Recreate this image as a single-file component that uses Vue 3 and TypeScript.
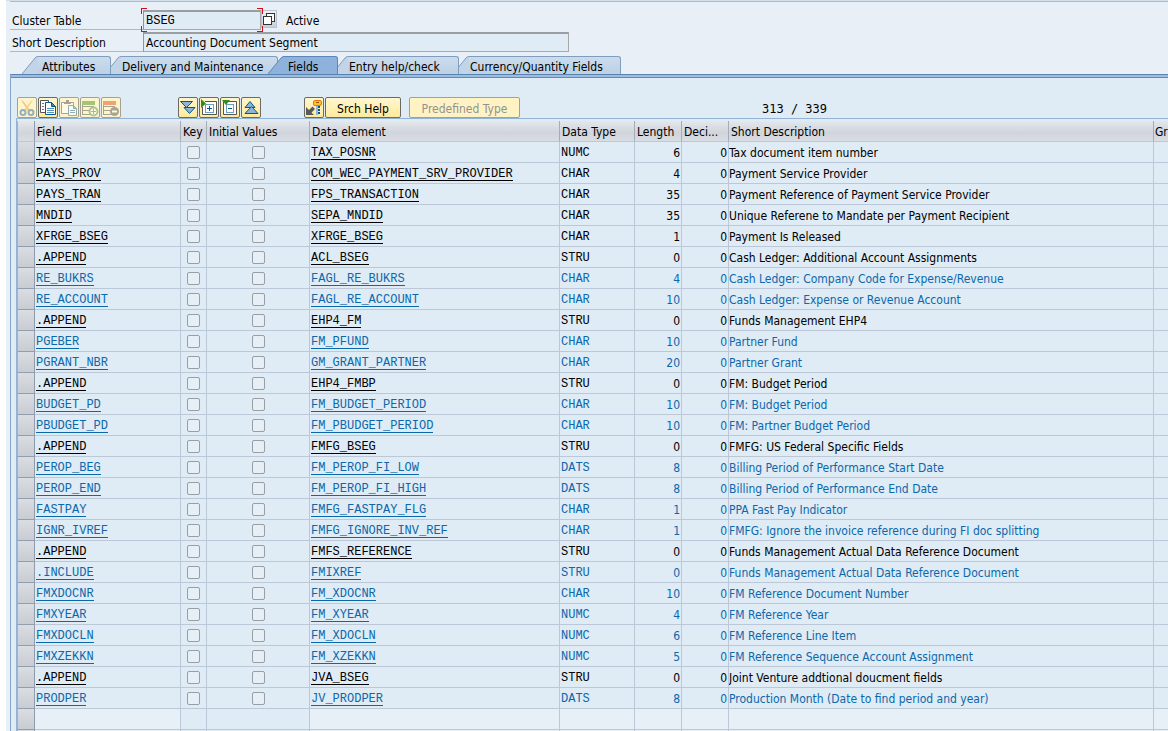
<script setup lang="ts">
import { ref } from 'vue'

interface FieldRow {
  field: string
  element: string
  type: string
  length: number
  text: string
  blue: boolean
}

const raw: [string, string, string, number, string, number][] = [
  ['TAXPS', 'TAX_POSNR', 'NUMC', 6, 'Tax document item number', 0],
  ['PAYS_PROV', 'COM_WEC_PAYMENT_SRV_PROVIDER', 'CHAR', 4, 'Payment Service Provider', 0],
  ['PAYS_TRAN', 'FPS_TRANSACTION', 'CHAR', 35, 'Payment Reference of Payment Service Provider', 0],
  ['MNDID', 'SEPA_MNDID', 'CHAR', 35, 'Unique Referene to Mandate per Payment Recipient', 0],
  ['XFRGE_BSEG', 'XFRGE_BSEG', 'CHAR', 1, 'Payment Is Released', 0],
  ['.APPEND', 'ACL_BSEG', 'STRU', 0, 'Cash Ledger: Additional Account Assignments', 0],
  ['RE_BUKRS', 'FAGL_RE_BUKRS', 'CHAR', 4, 'Cash Ledger: Company Code for Expense/Revenue', 1],
  ['RE_ACCOUNT', 'FAGL_RE_ACCOUNT', 'CHAR', 10, 'Cash Ledger: Expense or Revenue Account', 1],
  ['.APPEND', 'EHP4_FM', 'STRU', 0, 'Funds Management EHP4', 0],
  ['PGEBER', 'FM_PFUND', 'CHAR', 10, 'Partner Fund', 1],
  ['PGRANT_NBR', 'GM_GRANT_PARTNER', 'CHAR', 20, 'Partner Grant', 1],
  ['.APPEND', 'EHP4_FMBP', 'STRU', 0, 'FM: Budget Period', 0],
  ['BUDGET_PD', 'FM_BUDGET_PERIOD', 'CHAR', 10, 'FM: Budget Period', 1],
  ['PBUDGET_PD', 'FM_PBUDGET_PERIOD', 'CHAR', 10, 'FM: Partner Budget Period', 1],
  ['.APPEND', 'FMFG_BSEG', 'STRU', 0, 'FMFG: US Federal Specific Fields', 0],
  ['PEROP_BEG', 'FM_PEROP_FI_LOW', 'DATS', 8, 'Billing Period of Performance Start Date', 1],
  ['PEROP_END', 'FM_PEROP_FI_HIGH', 'DATS', 8, 'Billing Period of Performance End Date', 1],
  ['FASTPAY', 'FMFG_FASTPAY_FLG', 'CHAR', 1, 'PPA Fast Pay Indicator', 1],
  ['IGNR_IVREF', 'FMFG_IGNORE_INV_REF', 'CHAR', 1, 'FMFG: Ignore the invoice reference during FI doc splitting', 1],
  ['.APPEND', 'FMFS_REFERENCE', 'STRU', 0, 'Funds Management Actual Data Reference Document', 0],
  ['.INCLUDE', 'FMIXREF', 'STRU', 0, 'Funds Management Actual Data Reference Document', 1],
  ['FMXDOCNR', 'FM_XDOCNR', 'CHAR', 10, 'FM Reference Document Number', 1],
  ['FMXYEAR', 'FM_XYEAR', 'NUMC', 4, 'FM Reference Year', 1],
  ['FMXDOCLN', 'FM_XDOCLN', 'NUMC', 6, 'FM Reference Line Item', 1],
  ['FMXZEKKN', 'FM_XZEKKN', 'NUMC', 5, 'FM Reference Sequence Account Assignment', 1],
  ['.APPEND', 'JVA_BSEG', 'STRU', 0, 'Joint Venture addtional doucment fields', 0],
  ['PRODPER', 'JV_PRODPER', 'DATS', 8, 'Production Month (Date to find period and year)', 1],
]
const rows: FieldRow[] = raw.map(([field, element, type, length, text, blue]) => ({
  field, element, type, length, text, blue: blue === 1,
}))

const tabs = ['Attributes', 'Delivery and Maintenance', 'Fields', 'Entry help/check', 'Currency/Quantity Fields']
const tabClasses = ['t-attr', 't-deliv', 't-fields', 't-entry', 't-curr']
const active = ref(2)
const tableName = ref('BSEG')
const description = ref('Accounting Document Segment')
</script>

<template>
  <main class="window">
    <form class="head" @submit.prevent>
      <div class="line">
        <label class="caption" for="table-name">Cluster Table</label>
        <span class="focus-box">
          <input id="table-name" v-model="tableName" class="input mono" type="text">
          <i class="corner tl"></i><i class="corner tr"></i><i class="corner bl"></i><i class="corner br"></i>
        </span>
        <button class="match" type="button" aria-label="Search values">
          <svg width="12" height="12" viewBox="0 0 12 12" fill="#fff" stroke="#333">
            <rect x="3.500" y="0.500" width="8" height="8" /><rect x="0.500" y="3.500" width="8" height="8" />
          </svg>
        </button>
        <span class="status">Active</span>
      </div>
      <div class="line">
        <label class="caption" for="description">Short Description</label>
        <input id="description" v-model="description" class="input wide" type="text">
      </div>
    </form>

    <div class="tabs" role="tablist">
      <button
        v-for="(tab, i) in tabs" :key="tab" type="button" role="tab" class="tab"
        :class="[tabClasses[i], { active: active === i }]" :aria-selected="active === i" @click="active = i"
      >
        <svg class="slope" width="16" height="18" viewBox="0 0 16 18">
          <path class="slope-fill" d="M0 18 L13 2 Q14 .5 16 .5 V18Z" />
          <path class="slope-line" d="M0 18 L13 2 Q14 .5 16 .5" fill="none" />
        </svg>
        <span class="tab-text">{{ tab }}</span>
      </button>
    </div>

    <section class="panel">
      <div class="toolbar">
        <div class="group edit">
          <button type="button" class="tool" disabled aria-label="Cut">
            <svg viewBox="0 0 18 18" fill="none">
              <path d="M3 1 L5 2 L12 11 L10 12Z" fill="#e8932c" /><path d="M15 1 L13 2 L6 11 L8 12Z" fill="#f2ad45" />
              <circle cx="5" cy="13.500" r="2.500" stroke="#2b6da5" stroke-width="2" /><circle cx="13" cy="13.500" r="2.500" stroke="#2b6da5" stroke-width="2" />
            </svg>
          </button>
          <button type="button" class="tool" aria-label="Copy">
            <svg viewBox="0 0 18 18">
              <path d="M1.500 1.500H9.500V13.500H1.500Z" fill="#fff" stroke="#555" /><path d="M3 4.500H5M3 7.500H5M3 10.500H5" stroke="#777" />
              <path d="M6.500 3.500H12.500L16.500 7.500V15.500H6.500Z" fill="#fff" stroke="#005b96" /><path d="M12.500 3.500V7.500H16.500Z" fill="#4c86b2" stroke="#005b96" /><path d="M8 9.500H15M8 11.500H15M8 13.500H15" stroke="#5a94be" />
            </svg>
          </button>
          <button type="button" class="tool" disabled aria-label="Paste">
            <svg viewBox="0 0 18 18">
              <path d="M1.500 3.500H13.500V14.500H1.500Z" fill="#fff" stroke="#555" /><path d="M4 5V3H6V1H9V3H11V5Z" fill="#555" />
              <path d="M8.500 6.500H13.500L16.500 9.500V16.500H8.500Z" fill="#fff" stroke="#246a9d" /><path d="M13.500 6.500V9.500H16.500Z" fill="#83abc9" stroke="#246a9d" /><path d="M10 11.500H15M10 13.500H15" stroke="#246a9d" />
            </svg>
          </button>
          <button type="button" class="tool" disabled aria-label="Insert row">
            <svg viewBox="0 0 18 18">
              <path d="M1.500 6V16M1 11.500H12M1 15.500H10" stroke="#555" fill="none" /><path d="M1.500 7.500H13" stroke="#555" /><rect x="1" y="2" width="13" height="4" fill="#4b981d" />
              <circle cx="12.500" cy="12.500" r="4" fill="#fff" stroke="#62975a" stroke-width="2" /><path d="M12.500 10V15M10 12.500H15" stroke="#438f35" />
            </svg>
          </button>
          <button type="button" class="tool" disabled aria-label="Delete row">
            <svg viewBox="0 0 18 18">
              <path d="M1.500 6V16M1 11.500H12M1 15.500H10" stroke="#555" fill="none" /><path d="M1.500 7.500H13" stroke="#555" /><rect x="1" y="2" width="13" height="4" fill="#dc561c" />
              <circle cx="12.500" cy="12.500" r="4.500" fill="#555" /><path d="M10 12.500H15" stroke="#fff" stroke-width="2" />
            </svg>
          </button>
        </div>
        <div class="group tree">
          <button type="button" class="tool" aria-label="Expand all">
            <svg viewBox="0 0 18 18" fill="#8fb4d4" stroke="#005b8e">
              <path d="M5 8.500H16L10.500 14.500Z" /><path d="M1.500 2.500H13.500L7.500 8.500Z" />
            </svg>
          </button>
          <button type="button" class="tool" aria-label="Expand include">
            <svg viewBox="0 0 18 18" fill="none">
              <path d="M5 2.500H16.500V15.500H2.500V8" stroke="#555" fill="#fff" /><rect x="5.500" y="5.500" width="8" height="8" stroke="#6e9fc4" /><path d="M9.500 7V12M7 9.500H12" stroke="#005b8e" /><path d="M1 0V9L6 4.500Z" fill="#378b16" />
            </svg>
          </button>
          <button type="button" class="tool" aria-label="Collapse include">
            <svg viewBox="0 0 18 18" fill="none">
              <path d="M2.500 2.500H15.500V15.500H2.500Z" stroke="#555" fill="#fff" /><rect x="5.500" y="5.500" width="7" height="8" stroke="#6e9fc4" /><path d="M7 9.500H11" stroke="#005b8e" /><path d="M1 1H9L5 6Z" fill="#378b16" />
            </svg>
          </button>
          <button type="button" class="tool" aria-label="Collapse all">
            <svg viewBox="0 0 18 18" fill="#8fb4d4" stroke="#005b8e">
              <path d="M3 8.500H13L8 2.500Z" /><path d="M3 14.500H16L9.500 7.500Z" />
            </svg>
          </button>
        </div>
        <div class="group help">
          <button type="button" class="tool" aria-label="Foreign keys">
            <svg viewBox="0 0 18 18">
              <rect x="8.500" y="1.500" width="8" height="5" rx="1.500" fill="#ffc32b" stroke="#e87808" /><path d="M11 3.500H14" stroke="#a85000" />
              <rect x="11" y="7" width="2" height="9" fill="#8fb8db" /><path d="M14 7V16" stroke="#005b8e" stroke-width="2" stroke-dasharray="2 1" />
              <path d="M1 8V16H9L6.500 13.500L10 10L7.500 7.500L4 11Z" fill="#5a5a5a" />
            </svg>
          </button>
          <button type="button" class="text-button search">Srch Help</button>
          <button type="button" class="text-button predefined" disabled>Predefined Type</button>
        </div>
        <output class="position">313 / 339</output>
      </div>

      <div class="grid">
        <table>
          <colgroup>
            <col class="c-sel"><col class="c-field"><col class="c-key"><col class="c-init"><col class="c-elem">
            <col class="c-type"><col class="c-num"><col class="c-num"><col><col class="c-group">
          </colgroup>
          <thead>
            <tr>
              <th aria-label="Selection"></th><th>Field</th><th>Key</th><th>Initial Values</th><th>Data element</th>
              <th>Data Type</th><th>Length</th><th>Deci...</th><th>Short Description</th><th class="last">Gr</th>
            </tr>
          </thead>
          <tbody>
            <tr v-for="row in rows" :key="row.field + row.element" :class="{ blue: row.blue }">
              <td class="sel"></td>
              <td class="mono"><a href="#">{{ row.field }}</a></td>
              <td class="tick"><input type="checkbox" :aria-label="`Key ${row.field}`"></td>
              <td class="tick"><input type="checkbox" :aria-label="`Initial value ${row.field}`"></td>
              <td class="mono"><a href="#">{{ row.element }}</a></td>
              <td class="mono type">{{ row.type }}</td>
              <td class="num">{{ row.length }}</td>
              <td class="num">0</td>
              <td class="desc">{{ row.text }}</td>
              <td class="last"></td>
            </tr>
            <tr v-for="n in 2" :key="n" class="empty">
              <td class="sel"></td><td></td><td class="locked"></td><td class="locked"></td><td></td>
              <td></td><td></td><td></td><td></td><td class="last"></td>
            </tr>
          </tbody>
        </table>
      </div>
    </section>
  </main>
</template>

<style>
body { background: #fff; }
</style>

<style scoped>
* { box-sizing: border-box; }
.window {
  height: 100vh;
  overflow: hidden;
  margin-left: 6px;
  padding-left: 4px;
  border-top: 1px solid #d3e0eb;
  background: #e8eff7;
  color: #000;
  font: 12px/16px Tahoma, "DejaVu Sans Condensed", "DejaVu Sans", sans-serif;
}
.head { padding-top: 8px; border-top: 1px solid #a9bfd0; }
.line { display: flex; width: 560px; height: 22px; }
.line:first-child { width: 310px; }
.caption { width: 133px; flex: none; padding: 3px 2px 0; height: 20px; border-bottom: 1px solid #b4b8bc; }
.input {
  width: 118px; height: 20px; margin: 0; padding: 0 2px; border: 1px solid #a6a8aa; border-top: 2px solid #9b9ea1;
  border-left-color: #929598; background: #dfebf5; font: inherit; color: #000; outline: none; border-radius: 0;
}
.input.wide { width: 426px; }
.mono, .input.mono { font-family: "Liberation Mono", "Courier New", monospace; }
.focus-box { position: relative; width: 118px; height: 20px; flex: none; }
.corner { position: absolute; width: 6px; height: 6px; border: 0 solid #d60c18; }
.tl { left: -2px; top: -2px; border-width: 1px 0 0 1px; }
.tr { right: -2px; top: -2px; border-width: 1px 1px 0 0; }
.bl { left: -2px; bottom: -2px; border-width: 0 0 1px 1px; }
.br { right: -2px; bottom: -2px; border-width: 0 1px 1px 0; }
.match { width: 16px; height: 18px; flex: none; padding: 2px 1px; border: 1px solid #b9c4d0; background: linear-gradient(#eef2f7, #c4cfdf); line-height: 0; }
.status { padding: 3px 0 0 9px; }

.tabs { display: flex; height: 20px; padding: 2px 0 0 12px; }
.tab {
  position: relative; z-index: 1; display: flex; height: 18px; margin: 0 0 0 -6px; padding: 0; border: 0;
  background: none; font: inherit; color: #000; text-align: left; white-space: nowrap;
}
.slope { flex: none; display: block; }
.slope-fill { fill: #c1d4e8; }
.slope-line { stroke: #7f9dbe; }
.tab-text {
  flex: 1; height: 18px; padding: 2px 0 0 1px; border-top: 1px solid #7f9dbe; border-right: 1px solid #7f9dbe;
  border-radius: 0 3px 0 0; background: linear-gradient(#cbdcec, #bcd0e6);
}
.tab.active { z-index: 4; }
.tab.active .slope-fill { fill: #8eb2dc; }
.tab.active .slope-line { stroke: #5c87b8; }
.tab.active .tab-text { background: #8eb2dc; border-color: #5c87b8; }
.t-attr { width: 89px; margin-left: 0; z-index: 3; }
.t-deliv { width: 173px; z-index: 2; }
.t-fields { width: 70px; margin-left: -10px; }
.t-entry { width: 127px; z-index: 2; }
.t-curr { width: 168px; }
.t-attr .tab-text, .t-fields .tab-text { padding-left: 4px; }

.panel { border-left: 1px solid #83a6cb; border-top: 1px solid #5a84b0; background: #dfebf5; padding-left: 5px; }
.panel::before { content: ""; display: block; height: 2px; margin-left: -5px; background: #9cbce1; border-bottom: 1px solid #6488ae; }
.toolbar { display: flex; height: 40px; padding: 19px 0 0 1px; }
.group { display: flex; gap: 1px; }
.tool {
  width: 20px; height: 21px; padding: 1px 0; border: 1px solid #6b6b62; border-radius: 2px;
  background: linear-gradient(#fff6cf, #ffea9c); line-height: 0;
}
.tool svg { width: 18px; height: 18px; display: block; }
.tool:disabled { border-color: #a2a28f; background: #fff5cd; }
.tool:disabled svg { opacity: .5; }
.edit { width: 161px; }
.tree { width: 126px; }
.help { width: 458px; }
.text-button {
  height: 21px; padding: 2px 0 0; border: 1px solid #6b6b62; border-radius: 2px;
  background: linear-gradient(#fff7d1, #ffea9a); font: inherit; color: #000;
}
.search { width: 76px; }
.predefined { width: 111px; margin-left: 7px; }
.text-button:disabled { color: #929292; border-color: #a2a28f; background: #fff3c4; }
.position { padding-top: 4px; font-family: "DejaVu Sans Mono", monospace; white-space: pre; }

.grid { border-top: 1px solid #92b3d4; border-left: 1px solid #92b3d4; padding-top: 2px; }
table { width: 100%; table-layout: fixed; border-collapse: separate; border-spacing: 0; }
.c-sel { width: 18px; }
.c-field { width: 146px; }
.c-key { width: 26px; }
.c-init { width: 103px; }
.c-elem { width: 250px; }
.c-type { width: 75px; }
.c-num { width: 47px; }
.c-group { width: 14px; }
th, td { height: 21px; padding: 0 0 0 1px; border-right: 1px solid #bcc8d8; border-bottom: 1px solid #bcc8d8; line-height: 16px; white-space: nowrap; overflow: hidden; text-align: left; }
th { padding: 1px 0 0 2px; font-weight: 400; border-right-color: #a4acb7; background: linear-gradient(#e4e7eb, #d0d5dc 60%, #dadde2); }
.last { border-right: 0; }
th.last { padding-left: 1px; }
.sel { background: linear-gradient(#dadde2, #c8ccd3); border-right: 1px solid #8f9bab; border-bottom-color: #939eac; border-left: 1px solid #a7b1bf; }
th:first-child { border-left: 1px solid #a7b1bf; border-right-color: #8f9bab; }
td a { display: block; width: max-content; height: 15px; margin-top: 1px; line-height: 16px; border-bottom: 1px solid currentColor; color: inherit; text-decoration: none; }
.blue { color: #0b68ab; }
.num { padding: 2px 1px 0 0; text-align: right; }
.desc { padding: 2px 0 0; }
.type { padding-top: 2px; }
.tick { padding: 0; text-align: center; line-height: 0; }
.tick input { appearance: none; display: inline-block; width: 13px; height: 13px; margin: 0; border: 1px solid #999ea4; border-radius: 2px; background: #e6eef6; vertical-align: middle; }
.empty td:not(.sel):not(.locked) { background: #e8f0f7; }
</style>
